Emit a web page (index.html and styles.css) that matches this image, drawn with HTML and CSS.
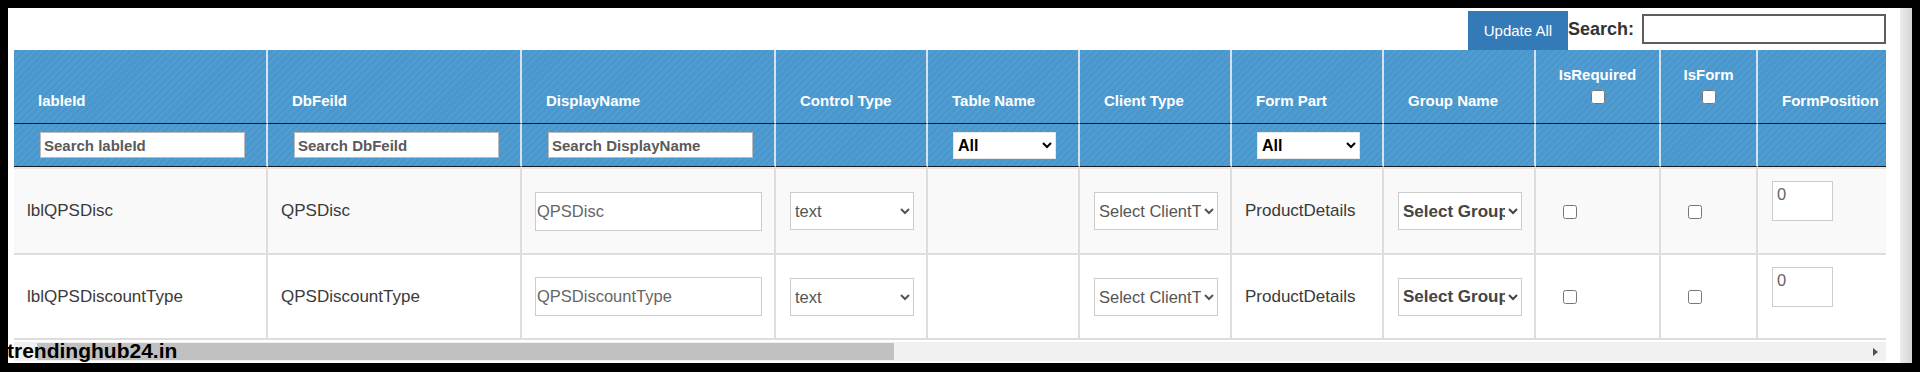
FILE: index.html
```html
<!DOCTYPE html>
<html lang="en">
<head>
  <meta charset="UTF-8" />
  <meta name="viewport" content="width=device-width, initial-scale=1.0"/>
  <title>Label Settings</title>
  <link rel="stylesheet" href="styles.css">
</head>
<body>

  <div class="screen">
    <div class="page">

      <div class="toolbar">
        <button class="btn-update">Update All</button>
        <label class="search-label" for="search">Search:</label>
        <input type="text" id="search" class="search-box" />
      </div>

      <div class="grid-wrap">
        <table class="grid">
          <thead>
            <tr class="head-row">
              <th class="c-wide">lableId</th>
              <th class="c-wide">DbFeild</th>
              <th class="c-wide">DisplayName</th>
              <th class="c-mid">Control Type</th>
              <th class="c-mid">Table Name</th>
              <th class="c-mid">Client Type</th>
              <th class="c-mid">Form Part</th>
              <th class="c-mid">Group Name</th>
              <th class="c-req center">IsRequired<input type="checkbox" class="head-check" /></th>
              <th class="c-form center">IsForm<input type="checkbox" class="head-check" /></th>
              <th class="c-pos">FormPosition</th>
            </tr>
            <tr class="filter-row">
              <th><input type="text" class="filter-input" placeholder="Search lableId" /></th>
              <th><input type="text" class="filter-input" placeholder="Search DbFeild" /></th>
              <th><input type="text" class="filter-input" placeholder="Search DisplayName" /></th>
              <th></th>
              <th><select class="filter-select"><option>All</option></select></th>
              <th></th>
              <th><select class="filter-select"><option>All</option></select></th>
              <th></th>
              <th></th>
              <th></th>
              <th></th>
            </tr>
          </thead>
          <tbody>
            <tr class="row-odd">
              <td>lblQPSDisc</td>
              <td>QPSDisc</td>
              <td><input type="text" class="cell-input" value="QPSDisc" /></td>
              <td><select class="cell-select"><option>text</option></select></td>
              <td></td>
              <td><select class="cell-select"><option>Select ClientType</option></select></td>
              <td>ProductDetails</td>
              <td><select class="cell-select group-select"><option>Select Group</option></select></td>
              <td><input type="checkbox" class="cell-check" /></td>
              <td><input type="checkbox" class="cell-check" /></td>
              <td><textarea class="pos-input">0</textarea></td>
            </tr>
            <tr class="row-even">
              <td>lblQPSDiscountType</td>
              <td>QPSDiscountType</td>
              <td><input type="text" class="cell-input" value="QPSDiscountType" /></td>
              <td><select class="cell-select"><option>text</option></select></td>
              <td></td>
              <td><select class="cell-select"><option>Select ClientType</option></select></td>
              <td>ProductDetails</td>
              <td><select class="cell-select group-select"><option>Select Group</option></select></td>
              <td><input type="checkbox" class="cell-check" /></td>
              <td><input type="checkbox" class="cell-check" /></td>
              <td><textarea class="pos-input">0</textarea></td>
            </tr>
          </tbody>
        </table>

        <div class="hscroll">
          <span class="arrow-left"></span>
          <div class="thumb"></div>
          <span class="arrow-right"></span>
        </div>
      </div>

    </div>
    <div class="vbar"></div>
  </div>

  <div class="watermark">trendinghub24.in</div>

</body>
</html>
```

FILE: styles.css
```css
html, body {
  margin: 0;
  height: 372px;
  overflow: hidden;
  background: #000;
}

body {
  font-family: "Liberation Sans", Arial, sans-serif;
  position: relative;
}

.screen {
  display: flex;
  margin: 8px 8px 0 8px;
  height: 355px;
  background: #fff;
}

.page {
  flex: 1;
  min-width: 0;
  padding: 0 14px 0 6px;
}

.vbar {
  width: 12px;
  background: linear-gradient(to right, #ececec, #d4d4d4);
}

/* top bar */
.toolbar {
  display: flex;
  justify-content: flex-end;
  align-items: flex-start;
  height: 42px;
  padding-top: 3px;
  box-sizing: border-box;
}

.btn-update {
  width: 100px;
  height: 39px;
  padding: 0;
  border: 0;
  background: #337ab7;
  color: #fff;
  font: 15px "Liberation Sans", Arial, sans-serif;
}

.search-label {
  margin-top: 8px;
  font-size: 18px;
  line-height: 20px;
  font-weight: bold;
  color: #333;
}

.search-box {
  width: 244px;
  height: 30px;
  box-sizing: border-box;
  margin: 3px 0 0 8px;
  border: 2px solid #5e5e5e;
}

/* grid */
.grid-wrap {
  width: 100%;
  overflow: hidden;
}

.grid {
  table-layout: fixed;
  width: 1894px;
  border-collapse: separate;
  border-spacing: 0;
  font-size: 15px;
}

.grid th {
  box-sizing: border-box;
  text-align: left;
  color: #fff;
  font-weight: bold;
  background: repeating-linear-gradient(-45deg, #4a97cd 0 3px, #519dd2 3px 5px);
  border-right: 2px solid #d3e2ee;
  border-bottom: 1px solid #1b1b1b;
}

.head-row th {
  height: 74px;
  padding: 0 8px 14px 24px;
  vertical-align: bottom;
}

.head-row th.center {
  text-align: center;
  padding-left: 8px;
}

.c-wide { width: 254px; }
.c-mid { width: 152px; }
.c-req { width: 125px; }
.c-form { width: 97px; }
.c-pos { width: 150px; }

.head-check {
  display: block;
  width: 14px;
  height: 14px;
  margin: 7px auto 5px;
}

.filter-row th {
  height: 43px;
  padding: 0 8px 0 26px;
  vertical-align: middle;
}

.filter-input {
  width: 205px;
  height: 26px;
  box-sizing: border-box;
  padding: 0 3px;
  border: 1px solid #bbb;
  font: bold 15px "Liberation Sans", Arial, sans-serif;
  color: #555;
}

.filter-input::placeholder {
  color: #5a5a5a;
}

.filter-select {
  width: 103px;
  height: 27px;
  margin-left: -1px;
  border: 1px solid #e8e8e8;
  background: #fff;
  font: bold 16px "Liberation Sans", Arial, sans-serif;
  color: #000;
}

.grid td {
  box-sizing: border-box;
  padding: 0 10px 0 13px;
  vertical-align: middle;
  font-size: 17px;
  color: #3a3a3a;
  border-right: 2px solid #ddd;
  border-bottom: 2px solid #ddd;
  white-space: nowrap;
}

.row-odd td {
  height: 88px;
  background: #f9f9f9;
  border-top: 2px solid #e6e6e6;
}

.row-even td {
  height: 85px;
  background: #fff;
}

.cell-input {
  width: 227px;
  height: 39px;
  box-sizing: border-box;
  padding: 0 1px;
  border: 1px solid #ccc;
  font: 16.5px "Liberation Sans", Arial, sans-serif;
  color: #666;
}

.cell-select {
  width: 124px;
  height: 38px;
  margin-left: 1px;
  border: 1px solid #ccc;
  background: #fff;
  font: 16.5px "Liberation Sans", Arial, sans-serif;
  color: #555;
}

.group-select {
  font-size: 17px;
  font-weight: bold;
  color: #444;
}

.cell-check {
  width: 14px;
  height: 14px;
  margin: 0 0 0 14px;
  vertical-align: middle;
}

.pos-input {
  width: 61px;
  height: 40px;
  box-sizing: border-box;
  padding: 3px 4px;
  margin: 0 0 20px 1px;
  border: 1px solid #ccc;
  resize: none;
  overflow: hidden;
  vertical-align: middle;
  font: 16.5px "Liberation Sans", Arial, sans-serif;
  color: #666;
}

/* horizontal scrollbar */
.hscroll {
  display: flex;
  align-items: center;
  height: 19px;
  margin-top: 2px;
  background: #f1f1f1;
}

.arrow-left {
  width: 23px;
}

.thumb {
  width: 857px;
  height: 17px;
  background: #c1c1c1;
}

.arrow-right {
  margin-left: auto;
  margin-right: 8px;
  border-left: 5px solid #505050;
  border-top: 4px solid transparent;
  border-bottom: 4px solid transparent;
}

.watermark {
  position: absolute;
  left: 7px;
  top: 340px;
  font-size: 21px;
  line-height: 22px;
  font-weight: bold;
  color: #000;
}
```
